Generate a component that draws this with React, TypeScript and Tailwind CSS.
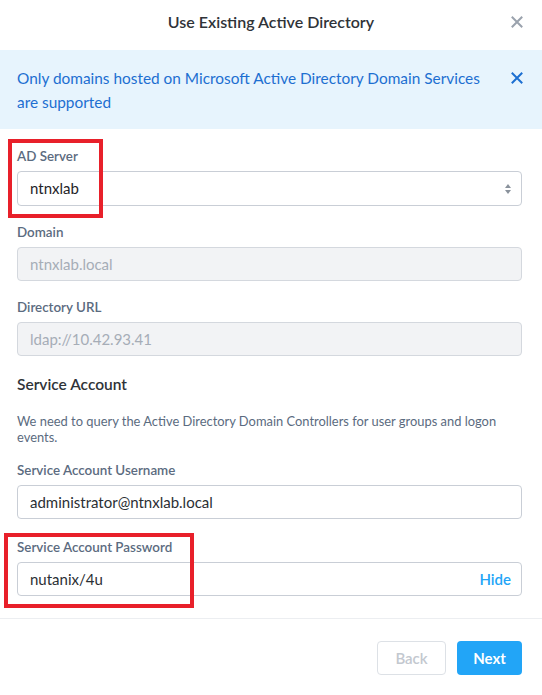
import React from "react";

function Label({ children }: { children: React.ReactNode }) {
  return <div className="text-[13.4px] leading-[18px] font-semibold text-[#5b6b80] mb-[6px]">{children}</div>;
}

function XIcon({ className }: { className?: string }) {
  return (
    <svg viewBox="0 0 12 12" className={className} fill="none" stroke="currentColor" strokeWidth="2" strokeLinecap="square">
      <path d="M1.5 1.5 L10.5 10.5 M10.5 1.5 L1.5 10.5" />
    </svg>
  );
}

export default function App() {
  return (
    <div className="relative w-[542px] h-[695px] bg-white overflow-hidden font-['Lato','Open_Sans',sans-serif]">
      {/* header */}
      <div className="h-[50px] flex items-center justify-center relative pb-[6px]">
        <div className="text-[16px] font-semibold text-[#2f3338]">Use Existing Active Directory</div>
        <button className="absolute right-[19px] top-[16px] w-[12px] h-[12px] text-[#9aa2ad]">
          <XIcon className="w-[12px] h-[12px]" />
        </button>
      </div>

      {/* banner */}
      <div className="bg-[#e7f4fd] flex items-start justify-between pl-[17px] pr-[19px] py-[16px] h-[79px]">
        <div className="text-[15.4px] leading-[24px] text-[#1d6fd1] w-[465px]">
          Only domains hosted on Microsoft Active Directory Domain Services are supported
        </div>
        <div className="pt-[6px] text-[#1d6fd1]">
          <XIcon className="w-[12px] h-[12px]" />
        </div>
      </div>

      {/* form */}
      <div className="pl-[17px] pr-[20px] pt-[18px] flex flex-col">
        <div className="mb-[17px]">
          <Label>AD Server</Label>
          <div className="h-[35px] border border-[#c9ced6] rounded-[4px] flex items-center justify-between pl-[12px] pr-[10px]">
            <span className="text-[15px] text-[#1f2328]">ntnxlab</span>
            <svg viewBox="0 0 6 10" className="w-[6px] h-[10px]" fill="#8a929c">
              <path d="M3 0 L6 4 L0 4 Z M3 10 L6 6 L0 6 Z" />
            </svg>
          </div>
        </div>
        <div className="mb-[17px]">
          <Label>Domain</Label>
          <div className="h-[34px] border border-[#d4d8de] bg-[#f2f3f5] rounded-[4px] flex items-center pl-[12px]">
            <span className="text-[15px] text-[#a6adb7]">ntnxlab.local</span>
          </div>
        </div>
        <div className="mb-[18px]">
          <Label>Directory URL</Label>
          <div className="h-[34px] border border-[#d4d8de] bg-[#f2f3f5] rounded-[4px] flex items-center pl-[12px]">
            <span className="text-[15px] text-[#a6adb7]">ldap://10.42.93.41</span>
          </div>
        </div>

        <div className="text-[15.5px] leading-[20px] font-semibold text-[#2f3338] mb-[19px]">Service Account</div>
        <div className="text-[12.9px] leading-[16px] text-[#5b6b80] mb-[16px] pr-[8px]">
          We need to query the Active Directory Domain Controllers for user groups and logon events.
        </div>

        <div className="mb-[19px]">
          <Label>Service Account Username</Label>
          <div className="h-[34px] border border-[#c9ced6] rounded-[4px] flex items-center pl-[12px]">
            <span className="text-[15px] text-[#2b2f34]">administrator@ntnxlab.local</span>
          </div>
        </div>
        <div>
          <Label>Service Account Password</Label>
          <div className="h-[34px] border border-[#c9ced6] rounded-[4px] flex items-center justify-between pl-[12px] pr-[10px]">
            <span className="text-[15px] text-[#2b2f34]">nutanix/4u</span>
            <span className="text-[15px] font-semibold text-[#22a5f7]">Hide</span>
          </div>
        </div>
      </div>

      {/* footer */}
      <div className="mt-[22px] border-t border-[#eceef1] flex justify-end gap-[11px] pr-[20px] pt-[22px]">
        <button className="w-[69px] h-[34px] border border-[#dde1e6] rounded-[4px] text-[15px] font-semibold text-[#c3c8cf] bg-white">
          Back
        </button>
        <button className="w-[65px] h-[34px] rounded-[4px] text-[15px] font-bold text-white bg-[#22a5f7]">
          Next
        </button>
      </div>

      {/* annotation overlays */}
      <div className="absolute left-[8px] top-[139px] w-[95px] h-[79px] border-[4px] border-[#e8202a]" />
      <div className="absolute left-[4px] top-[533px] w-[190px] h-[75px] border-[4px] border-[#e8202a]" />
    </div>
  );
}
